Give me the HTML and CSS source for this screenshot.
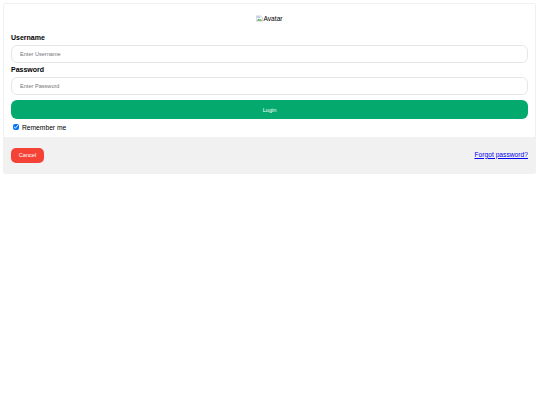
FILE: index.html
```html
<!DOCTYPE html>
<html lang="en">
<head>
	<meta charset="UTF-8">
	<title>Login</title>
	<link rel="stylesheet" href="styles.css">
</head>
<body>
	<form class="card">
		<div class="avatar">
			<svg class="broken" width="7" height="7" viewBox="0 0 16 16">
				<path d="M1 2h10l4 4v8H1z" fill="#fff" stroke="#a8a8a8"/>
				<path d="M2 13l4-5 3 3 2-2 3 4z" fill="#5fa85f"/>
				<path d="M2 3h8v4H2z" fill="#b5cdf0"/>
			</svg><span>Avatar</span>
		</div>
		<div class="fields">
			<label class="label">Username</label>
			<input class="input" type="text" placeholder="Enter Username">
			<label class="label">Password</label>
			<input class="input" type="password" placeholder="Enter Password">
			<button class="login" type="button">Login</button>
			<label class="remember"><input class="check" type="checkbox" checked>Remember me</label>
		</div>
		<div class="bottom">
			<button class="cancel" type="button">Cancel</button>
			<a class="forgot" href="#">Forgot password?</a>
		</div>
	</form>
</body>
</html>
```

FILE: styles.css
```css
* {
	box-sizing: border-box;
}
body {
	margin: 3px 4px 0 3px;
	font-family: "Liberation Sans", Arial, sans-serif;
	background: #fff;
}
.card {
	border: 1px solid #f1f1f1;
	border-radius: 2px;
	overflow: hidden;
}
.avatar {
	display: flex;
	justify-content: center;
	align-items: center;
	height: 27px;
	padding-top: 2px;
	font-size: 6.7px;
	color: #000;
}
.broken {
	display: block;
}
.fields {
	padding: 0 7px;
	display: flex;
	flex-direction: column;
}
.label {
	font-size: 7px;
	font-weight: bold;
	line-height: 9px;
	margin-top: 2px;
	margin-bottom: 3px;
}
.input {
	height: 18px;
	border: 1px solid #e6e6e6;
	border-radius: 6px;
	padding: 0 8px;
	font-family: inherit;
	font-size: 5.6px;
	background: #fff;
}
.input::placeholder {
	color: #757575;
}
.login {
	height: 19px;
	margin-top: 5px;
	border: 0;
	border-radius: 6px;
	background: #04aa6d;
	color: #fff;
	font-family: inherit;
	font-size: 5.6px;
}
.remember {
	display: flex;
	align-items: center;
	height: 16px;
	font-size: 6.7px;
}
.check {
	width: 6px;
	height: 6px;
	margin: 0 3px 0 2px;
}
.bottom {
	display: flex;
	justify-content: space-between;
	align-items: center;
	height: 36px;
	margin-top: 2px;
	padding: 0 7px;
	background: #f1f1f1;
}
.cancel {
	width: 33px;
	height: 15px;
	border: 0;
	border-radius: 5px;
	background: #f44336;
	color: #fff;
	font-family: inherit;
	font-size: 5.6px;
}
.forgot {
	margin-bottom: 2px;
	font-size: 6.7px;
	color: #0000ee;
}
```
